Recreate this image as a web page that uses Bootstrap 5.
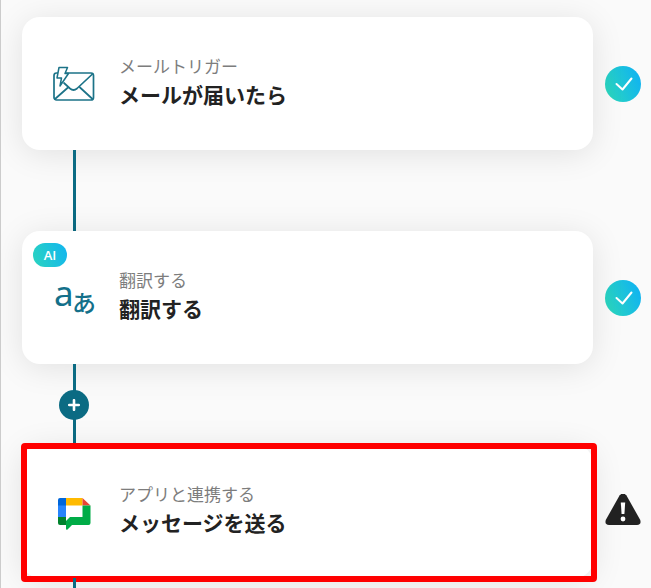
<!DOCTYPE html>
<html lang="ja">
<head>
<meta charset="utf-8">
<meta name="viewport" content="width=device-width, initial-scale=1">
<title>フロー</title>
<link href="https://cdn.jsdelivr.net/npm/bootstrap@5.3.0/dist/css/bootstrap.min.css" rel="stylesheet">
<style>
body{background:#fafafa;font-family:"Noto Sans CJK JP","Noto Sans",sans-serif;color:#222}
.flow{border-left:1px solid #ccc;padding:17px 10px 0 21px;height:100vh;overflow:hidden}
.step{gap:12px}
.step-card{min-height:133px;padding:0 31px;gap:24px;background:#fff;border:0;border-radius:18px;box-shadow:0 4px 32px rgba(0,0,0,.1)}
.step-icon{width:42px;height:42px;overflow:visible}
.step-kind{font-size:17px;line-height:24px;color:#7d7d7d}
.step-name{font-size:21px;line-height:32px;font-weight:700;color:#222}
.step-text{padding-bottom:4px}
.status{width:36px;height:36px}
.connector{height:81px;width:104px}
.connector::before{content:"";position:absolute;top:0;bottom:0;left:51px;width:3px;background:#0b6b83}
.add-btn{width:30px;height:30px;background:#0b6b83;z-index:1}
.ai-tag{top:12px;left:11px;width:34px;height:24px;border-radius:12px;font:600 13px/24px "Open Sans","Noto Sans",sans-serif;color:#fff;background:linear-gradient(70deg,#2bd4bf,#12b5f0)}
.focus-frame{inset:-2px -4px -4px -1px;border:6px solid #f00;border-radius:4px}
</style>
</head>
<body>
<svg width="0" height="0" class="position-absolute" aria-hidden="true">
  <defs>
    <linearGradient id="teal" x1="0" y1=".7" x2="1" y2=".3"><stop offset="0" stop-color="#2bd6bd"/><stop offset="1" stop-color="#10b3f2"/></linearGradient>
    <symbol id="done" viewBox="0 0 36 36"><circle cx="18" cy="18" r="18" fill="url(#teal)"/><path d="M11.500 18l6 5.500 9-11" fill="none" stroke="#fff" stroke-width="2" stroke-linecap="round" stroke-linejoin="round"/></symbol>
  </defs>
</svg>
<main class="flow">
  <section class="step d-flex align-items-center">
    <div class="step-card card flex-row align-items-center flex-grow-1">
      <svg class="step-icon flex-shrink-0" viewBox="0 0 42 42" fill="none" stroke="#1c7388" stroke-width="1.700" stroke-linejoin="round" stroke-linecap="round" aria-hidden="true">
        <rect x="1" y="10" width="39.500" height="27" rx="2.500"/>
        <path d="M39.500 11L24 25.500q-3.500 3-7 0l-6-5.500M2 36L15 24.500M39.500 36L27 24.500"/>
        <path d="M6 4.500h8.500l-2.500 6h3.500L7 23l1.500-8H4z" fill="#fff" stroke-width="1.500"/>
      </svg>
      <div class="step-text">
        <div class="step-kind">メールトリガー</div>
        <div class="step-name">メールが届いたら</div>
      </div>
    </div>
    <svg class="status flex-shrink-0" role="img" aria-label="完了"><use href="#done"/></svg>
  </section>

  <div class="connector position-relative"></div>

  <section class="step d-flex align-items-center">
    <div class="step-card card flex-row align-items-center flex-grow-1">
      <span class="ai-tag position-absolute text-center">AI</span>
      <svg class="step-icon flex-shrink-0" viewBox="0 0 42 42" fill="#14708a" aria-hidden="true">
        <text x="1" y="29" font-family="Noto Sans, sans-serif" font-size="35">a</text>
        <text x="19" y="35" font-family="Noto Sans CJK JP, sans-serif" font-size="24" font-weight="500">あ</text>
      </svg>
      <div class="step-text">
        <div class="step-kind">翻訳する</div>
        <div class="step-name">翻訳する</div>
      </div>
    </div>
    <svg class="status flex-shrink-0" role="img" aria-label="完了"><use href="#done"/></svg>
  </section>

  <div class="connector position-relative d-flex align-items-center justify-content-center">
    <button type="button" class="add-btn btn rounded-circle border-0 p-0 d-flex align-items-center justify-content-center" aria-label="追加">
      <svg width="12" height="12" viewBox="0 0 12 12"><path d="M6 1.200v9.600M1.200 6h9.600" stroke="#fff" stroke-width="2.600" stroke-linecap="round"/></svg>
    </button>
  </div>

  <section class="step d-flex align-items-center">
    <div class="step-card card flex-row align-items-center flex-grow-1">
      <svg class="step-icon flex-shrink-0" viewBox="0 0 42 42" aria-hidden="true">
        <path d="M5 14h8v12H5z" fill="#2684fc"/>
        <path d="M7 7h6v7.500H5V9q0-2 2-2z" fill="#0066da"/>
        <path d="M13 7h16.500v7.500H13z" fill="#ffba00"/>
        <path d="M29.500 7l8 7.500h-8z" fill="#ea4335"/>
        <path d="M5 26h8v8H7q-2 0-2-2z" fill="#00832d"/>
        <path d="M29.500 14.500h8V32q0 2-2 2H19l-4.500 4.500q-1.500 1-1.500-1V30l4-4h12.500z" fill="#00ac47"/>
      </svg>
      <div class="step-text">
        <div class="step-kind">アプリと連携する</div>
        <div class="step-name">メッセージを送る</div>
      </div>
      <div class="focus-frame position-absolute"></div>
    </div>
    <svg class="status flex-shrink-0" viewBox="0 0 36 36" role="img" aria-label="警告">
      <path d="M14.500 1.500q3.500-4 7 0L35 25.500q2 5-3 5.500H4Q-1 30.500 1 25.500z" fill="#222"/>
      <path d="M15.800 8.500h4.400l-.8 11.500h-2.800z" fill="#fff"/><circle cx="18" cy="25" r="2.400" fill="#fff"/>
    </svg>
  </section>

  <div class="connector position-relative"></div>
</main>
<script src="https://cdn.jsdelivr.net/npm/bootstrap@5.3.0/dist/js/bootstrap.bundle.min.js"></script>
</body>
</html>
